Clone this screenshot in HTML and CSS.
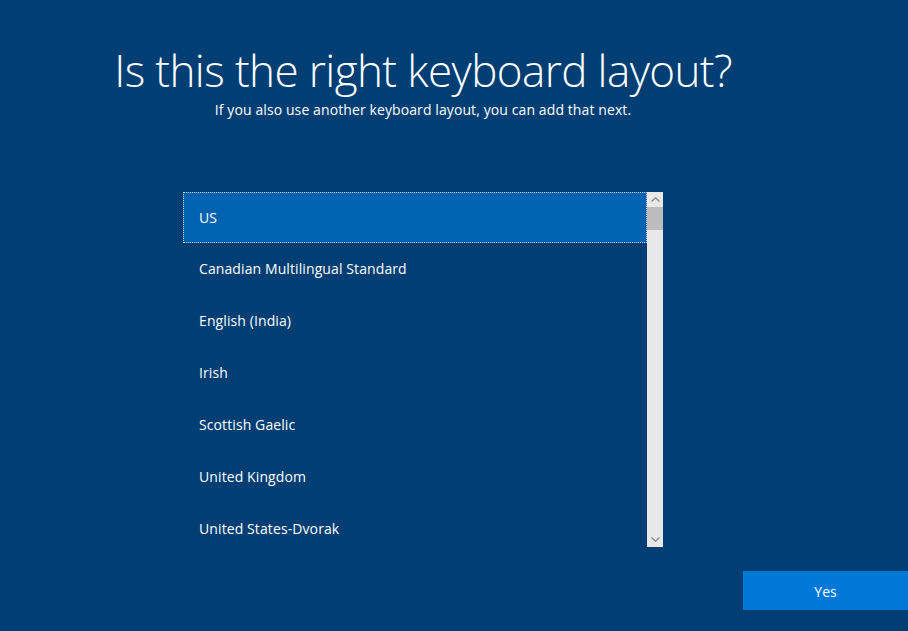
FILE: index.html
```html
<!DOCTYPE html>
<html lang="en">
<head>
    <meta charset="UTF-8">
    <title>Keyboard layout</title>
    <link rel="stylesheet" href="styles.css">
</head>
<body>
    <main class="page">
        <h1 class="title">Is this the right keyboard layout?</h1>
        <p class="subtitle">If you also use another keyboard layout, you can add that next.</p>
        <div class="listbox">
            <ul class="items">
                <li class="item selected">US</li>
                <li class="item">Canadian Multilingual Standard</li>
                <li class="item">English (India)</li>
                <li class="item">Irish</li>
                <li class="item">Scottish Gaelic</li>
                <li class="item">United Kingdom</li>
                <li class="item">United States-Dvorak</li>
            </ul>
            <div class="scrollbar">
                <div class="arrow">
                    <svg width="9" height="5" viewBox="0 0 9 5"><path d="M0.5 4.5 L4.5 0.8 L8.5 4.5" fill="none" stroke="#858585" stroke-width="1.2"/></svg>
                </div>
                <div class="thumb"></div>
                <div class="track"></div>
                <div class="arrow">
                    <svg width="9" height="5" viewBox="0 0 9 5"><path d="M0.5 0.5 L4.5 4.2 L8.5 0.5" fill="none" stroke="#858585" stroke-width="1.2"/></svg>
                </div>
            </div>
        </div>
    </main>
    <footer class="actions">
        <button type="button" class="yes">Yes</button>
    </footer>
</body>
</html>
```

FILE: styles.css
```css
html, body {
    margin: 0;
    height: 100%;
}
body {
    background-color: #003e73;
    color: white;
    font-family: "Segoe UI", "Open Sans", sans-serif;
    overflow: hidden;
    position: relative;
}
.page {
    width: 846px;
    display: flex;
    flex-direction: column;
    align-items: center;
}
.title {
    margin: 41px 0 0;
    font-size: 44px;
    font-weight: 300;
    letter-spacing: -0.6px;
    line-height: 58px;
}
.subtitle {
    margin: 1px 0 0;
    font-size: 14px;
    letter-spacing: 0.1px;
    line-height: 20px;
}
.listbox {
    margin-top: 72px;
    width: 480px;
    height: 355px;
    display: flex;
    overflow: hidden;
}
.items {
    list-style: none;
    margin: 0;
    padding: 0;
    flex: 1;
}
.item {
    height: 52px;
    line-height: 50px;
    padding: 1px 0 0 16px;
    font-size: 14px;
    letter-spacing: 0.1px;
    box-sizing: border-box;
}
.selected {
    height: 51px;
    background-color: #0063b1;
    border: 1px dotted #d0d0d0;
    padding: 0 0 0 15px;
    line-height: 49px;
}
.scrollbar {
    width: 16px;
    background-color: #e8e8e8;
    display: flex;
    flex-direction: column;
}
.arrow {
    height: 15px;
    display: flex;
    align-items: center;
    justify-content: center;
}
.thumb {
    height: 23px;
    background-color: #bcbcbc;
}
.track {
    flex: 1;
}
.actions {
    position: absolute;
    right: 0;
    top: 571px;
}
.yes {
    width: 165px;
    height: 39px;
    padding-top: 2px;
    border: none;
    background-color: #0078d7;
    color: white;
    font-family: "Segoe UI", "Open Sans", sans-serif;
    font-size: 14px;
}
```
